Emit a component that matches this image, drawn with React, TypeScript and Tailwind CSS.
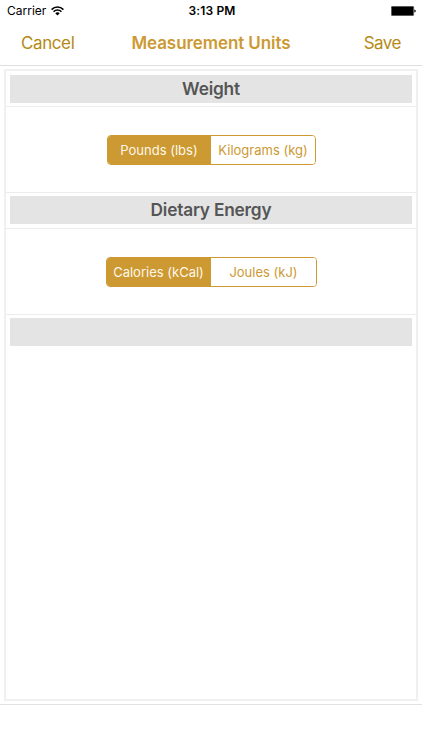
import { useState } from 'react';

interface UnitSectionProps {
  title: string;
  options: string[];
  controlClass: string;
  headerClass?: string;
}

// Grey heading strip, also used empty to close the list
const SectionHeader = ({ title, className = 'pt-[3px]' }: { title?: string; className?: string }) => (
  <div className={`flex h-[35px] flex-col px-[4px] pb-[4px] ${className}`}>
    <h2 className="flex-1 bg-[#e4e4e4] text-center text-[17.3px] leading-[28px] font-semibold tracking-[-0.2px] text-[#555555]">
      {title}
    </h2>
  </div>
);

const UnitSection = ({ title, options, controlClass, headerClass }: UnitSectionProps) => {
  const [selected, setSelected] = useState(0);

  return (
    <section>
      <SectionHeader title={title} className={headerClass} />
      <div className="flex h-[87px] justify-center border-y border-[#ececec] pt-[28px]">
        {/* Segmented control */}
        <div className={`flex h-[30px] overflow-hidden rounded-[4px] border border-[#cc9933] ${controlClass}`}>
          {options.map((option, i) => (
            <button
              key={option}
              onClick={() => setSelected(i)}
              className={`flex-1 text-[13px] leading-[28px] whitespace-nowrap ${
                i === selected ? 'bg-[#cc9933] text-[#fff8e8]' : 'bg-white pl-px text-[#cc9933]'
              }`}
            >
              {option}
            </button>
          ))}
        </div>
      </div>
    </section>
  );
};

export default function App() {
  return (
    <div className="flex h-[750px] w-[422px] flex-col overflow-hidden bg-white font-['Inter','Liberation_Sans',sans-serif]">
      {/* Status bar */}
      <div className="grid h-[22px] grid-cols-3 items-center pr-[6px] pl-[7px] text-[12px] text-black">
        <div className="flex items-center gap-[5px]">
          <span>Carrier</span>
          <svg width="13" height="10" viewBox="0 0 13 10" fill="none" stroke="black" strokeWidth="1.6">
            <path d="M0.6 3.6C3.9 0.2 9.1 0.2 12.4 3.6" />
            <path d="M2.6 5.7C4.8 3.5 8.2 3.5 10.4 5.7" />
            <path d="M6.5 9.4L4.3 7.2C5.5 6 7.5 6 8.7 7.2Z" fill="black" stroke="none" />
          </svg>
        </div>
        <span className="pl-px text-center font-semibold tracking-[0.15px]">3:13 PM</span>
        <svg className="justify-self-end" width="25" height="10" viewBox="0 0 25 10">
          <rect x="0.3" y="0.3" width="22.4" height="9.4" rx="1" fill="black" stroke="#777777" strokeWidth="0.6" />
          <path d="M23.3 3.5C25.2 3.7 25.2 6.3 23.3 6.5Z" fill="black" />
        </svg>
      </div>

      {/* Navigation bar */}
      <header className="flex h-[44px] items-center justify-between border-b border-[#dedede] px-[21px] text-[17px] text-[#b58a14]">
        <button className="w-[54px] text-left tracking-[-0.4px]">Cancel</button>
        <h1 className="font-semibold tracking-[-0.08px] text-[#cc9933]">Measurement Units</h1>
        <button className="w-[54px] text-right tracking-[-0.5px]">Save</button>
      </header>

      {/* Units */}
      <main className="mx-[4px] mt-[3px] h-[632px] border-2 border-[#f0f0f0]">
        <UnitSection
          title="Weight"
          headerClass="pt-[4px]"
          controlClass="w-[209px]"
          options={['Pounds (lbs)', 'Kilograms (kg)']}
        />
        <UnitSection
          title="Dietary Energy"
          controlClass="w-[211px]"
          options={['Calories (kCal)', 'Joules (kJ)']}
        />
        <SectionHeader />
      </main>
      <footer className="mt-[3px] flex-1 border-t border-[#e2e2e2]" />
    </div>
  );
}
